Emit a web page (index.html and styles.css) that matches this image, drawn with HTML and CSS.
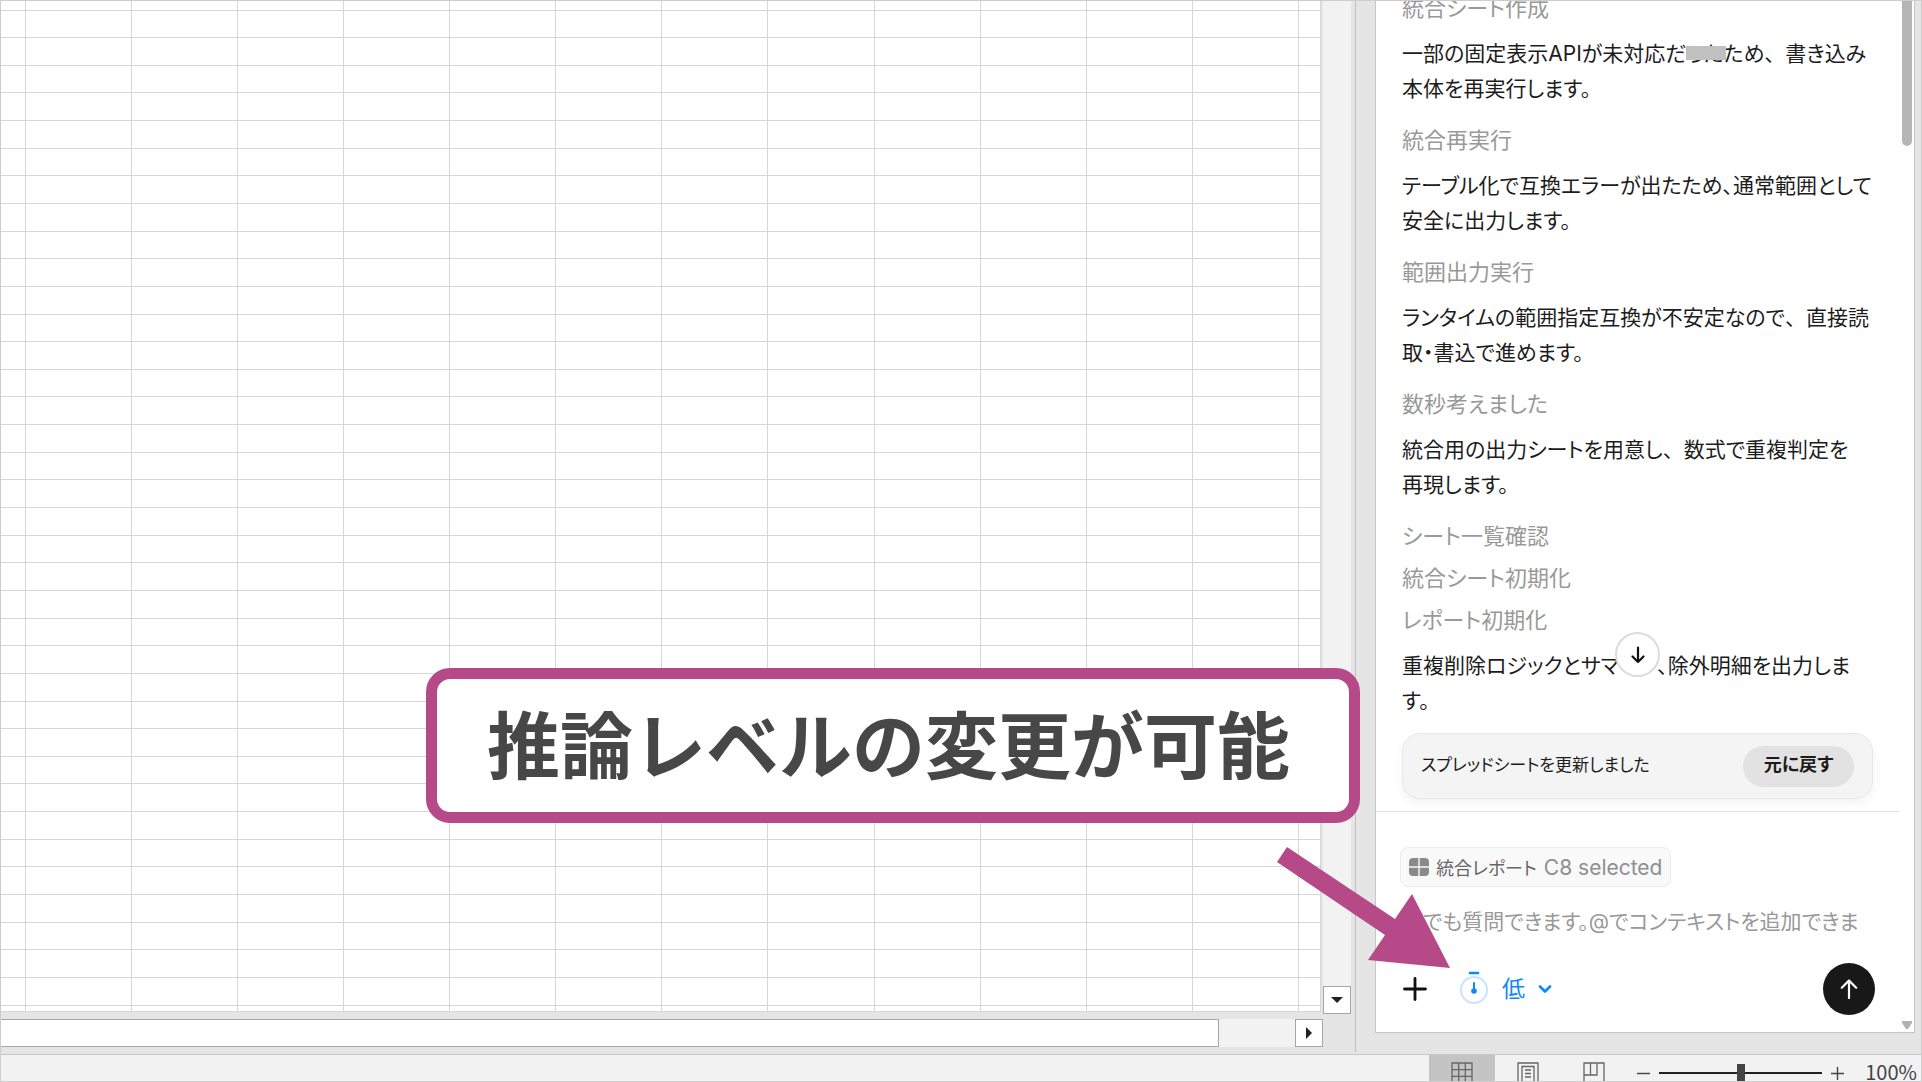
FILE: index.html
```html
<!DOCTYPE html>
<html lang="ja">
<head>
<meta charset="utf-8">
<title>統合レポート</title>
<link rel="stylesheet" href="styles.css">
</head>
<body>
<div class="app">
  <div class="workspace">
    <main class="workbook">
      <div class="sheet-area">
        <table class="sheet" id="sheet" aria-label="統合レポート"></table>
        <div class="v-scroll"><button class="scroll-btn" aria-label="下へスクロール"><svg width="12" height="6" viewBox="0 0 12 6"><path d="M0 0H12L6 6Z" fill="#222"/></svg></button></div>
      </div>
      <div class="h-scroll">
        <div class="h-thumb"></div>
        <button class="scroll-btn" aria-label="右へスクロール"><svg width="6" height="12" viewBox="0 0 6 12"><path d="M0 0V12L6 6Z" fill="#222"/></svg></button>
      </div>
    </main>
    <aside class="side">
      <div class="panel">
        <section class="log">
          <p class="step">統合シート作成</p>
          <p class="msg">一部の固定表示APIが未対応だったため<span class="comma">、</span>書き込み<br>本体を再実行します。</p>
          <p class="step">統合再実行</p>
          <p class="msg">テーブル化で互換エラーが出たため、通常範囲として<br>安全に出力します。</p>
          <p class="step">範囲出力実行</p>
          <p class="msg">ランタイムの範囲指定互換が不安定なので<span class="comma">、</span>直接読<br>取・書込で進めます。</p>
          <p class="step">数秒考えました</p>
          <p class="msg">統合用の出力シートを用意し<span class="comma">、</span>数式で重複判定を<br>再現します。</p>
          <p class="step">シート一覧確認</p>
          <p class="step">統合シート初期化</p>
          <p class="step">レポート初期化</p>
          <p class="msg">重複削除ロジックとサマリー、除外明細を出力しま<br>す。</p>
          <div class="card">
            <span>スプレッドシートを更新しました</span>
            <button class="undo">元に戻す</button>
          </div>
          <span class="handle"></span>
          <button class="jump" aria-label="最新へ移動"><svg width="16" height="18" viewBox="0 0 16 18" fill="none" stroke="#111" stroke-width="2.2" stroke-linecap="round" stroke-linejoin="round"><path d="M8 1.5V16M2.5 10.5L8 16L13.5 10.5"/></svg></button>
        </section>
        <form class="composer">
          <div class="chip">
            <svg width="20" height="18" viewBox="0 0 20 18" fill="#8a8a8a"><path d="M4 0H9.3V8.300H0V4A4 4 0 0 1 4 0ZM10.700 0H16A4 4 0 0 1 20 4V8.300H10.700ZM0 9.700H9.300V18H4A4 4 0 0 1 0 14ZM10.700 9.700H20V14A4 4 0 0 1 16 18H10.700Z"/></svg>
            <span class="chip-name">統合レポート</span><span class="chip-range">C8 selected</span>
          </div>
          <input class="prompt" type="text" aria-label="メッセージ" placeholder="何でも質問できます。@でコンテキストを追加できま">
          <div class="tools">
            <button type="button" class="icon-btn" aria-label="追加"><svg width="24" height="24" viewBox="0 0 24 24" stroke="#111" stroke-width="2.800" stroke-linecap="round"><path d="M12 1.500V22.500M1.500 12H22.500"/></svg></button>
            <button type="button" class="level">
              <svg width="30" height="36" viewBox="0 0 30 36" fill="none"><circle cx="15" cy="19" r="13" stroke="#c9e4ff" stroke-width="2"/><path d="M11 2H19" stroke="#0d88ff" stroke-width="2.600" stroke-linecap="round"/><path d="M15 12V20" stroke="#0d88ff" stroke-width="2" stroke-linecap="round"/><circle cx="15" cy="20" r="2.800" fill="#0d88ff"/></svg>
              <span>低</span>
              <svg width="14" height="10" viewBox="0 0 14 10" fill="none" stroke="#0d88ff" stroke-width="2.600" stroke-linecap="round" stroke-linejoin="round"><path d="M2 2.500L7 7.500L12 2.500"/></svg>
            </button>
            <button type="submit" class="send" aria-label="送信"><svg width="18" height="20" viewBox="0 0 18 20" fill="none" stroke="#fff" stroke-width="2.200" stroke-linecap="round" stroke-linejoin="round"><path d="M9 19V1.500M1.800 8.700L9 1.500L16.200 8.700"/></svg></button>
          </div>
        </form>
        <span class="panel-thumb"></span>
        <svg class="panel-down" width="10" height="8" viewBox="0 0 10 8"><path d="M0 0H10V2L6 8H4L0 2Z" fill="#b2b2b2"/></svg>
      </div>
    </aside>
  </div>
  <footer class="status">
    <button class="view active" aria-label="標準"><svg width="22" height="22" viewBox="0 0 22 22" fill="none" stroke="#666" stroke-width="1.300"><path d="M1 1H21V21H1ZM7.700 1V21M14.300 1V21M1 7.700H21M1 14.300H21"/></svg></button>
    <button class="view" aria-label="ページレイアウト"><svg width="22" height="22" viewBox="0 0 22 22" fill="none" stroke="#666" stroke-width="1.300"><path d="M1 22V1H21V22M5 22V4.500H17V22M8 8H14M8 11.500H14M8 15H14"/></svg></button>
    <button class="view" aria-label="改ページプレビュー"><svg width="22" height="22" viewBox="0 0 22 22" fill="none" stroke="#666" stroke-width="1.300"><path d="M1 22V1H21V22M1 13H14V1M7.500 1V13"/></svg></button>
    <button class="zoom-btn minus" aria-label="縮小"><svg width="13" height="13" viewBox="0 0 13 13" stroke="#444" stroke-width="1.400"><path d="M0 6.500H13"/></svg></button>
    <input class="zoom" type="range" min="0" max="100" value="50" aria-label="ズーム">
    <button class="zoom-btn" aria-label="拡大"><svg width="13" height="13" viewBox="0 0 13 13" stroke="#444" stroke-width="1.400"><path d="M0 6.500H13M6.500 0V13"/></svg></button>
    <span class="percent">100%</span>
  </footer>
  <svg class="pointer" width="176" height="124" viewBox="1276 846 176 124"><path d="M1287 847L1395 919L1412 894L1450 968L1368 960L1385 935L1277 862Z" fill="#b64a88"/></svg>
  <div class="callout">推論レベルの変更が可能</div>
</div>
<script src="sheet.js"></script>
</body>
</html>
```
FILE: styles.css
```css
* { box-sizing: border-box; }
body {
  margin: 0;
  font-family: Inter, "Noto Sans CJK JP", sans-serif;
  color: #1c1c1c;
}
button {
  margin: 0;
  padding: 0;
  border: 0;
  background: none;
  font: inherit;
  color: inherit;
}
svg { display: block; flex: none; }
.app {
  position: relative;
  display: flex;
  flex-direction: column;
  height: 100vh;
  overflow: hidden;
  border: 1px solid #cdcdcd;
  background: #e5e5e5;
}
.workspace { display: flex; flex: 1; min-height: 0; }

/* Workbook */
.workbook {
  display: flex;
  flex-direction: column;
  flex: 1;
  min-width: 0;
  margin-bottom: 2px;
  padding-bottom: 5px;
  border-right: 1px solid #bebebe;
}
.sheet-area { display: flex; flex: 1; min-height: 0; gap: 2px; padding-right: 4px; }
.sheet {
  flex: 1;
  height: calc(100% - 2px);
  table-layout: fixed;
  border-collapse: collapse;
  border-right: 1px solid #a0a0a0;
  border-bottom: 1px solid #a0a0a0;
  background: #fff;
}
.sheet td { padding: 0; border: 0 solid #d6d6d6; border-width: 0 1px 1px 0; }
.sheet .edge-col { width: 24px; }
.sheet .last-col { width: 22px; }
.sheet .edge-row { height: 9px; }
.sheet .last-row { height: 6px; }
.v-scroll { display: flex; align-items: flex-end; width: 28px; background: #f2f2f2; }
.scroll-btn {
  display: flex;
  align-items: center;
  justify-content: center;
  flex: none;
  width: 28px;
  height: 28px;
  border: 1px solid #a6a6a6;
  background: #fff;
}
.h-scroll { display: flex; margin: 5px 32px 0 0; background: #f2f2f2; }
.h-thumb { flex: 1; margin-right: 76px; border: 1px solid #a6a6a6; border-left: 0; background: #fff; }

/* Assistant panel */
.side { flex: none; width: 565px; padding: 0 6px 21px 19px; }
.panel {
  position: relative;
  display: flex;
  flex-direction: column;
  height: 100%;
  border: 1px solid #c6c6c6;
  border-top: 0;
  background: #fff;
}
.log {
  position: relative;
  display: flex;
  flex-direction: column;
  justify-content: flex-end;
  flex: 1;
  min-height: 0;
  overflow: hidden;
  margin-right: 15px;
  padding: 0 26px 12px 26px;
  border-bottom: 1px solid #e4e4e4;
  font-size: 22px;
  font-feature-settings: "palt";
  white-space: nowrap;
}
.step { flex: none; margin: 0 0 14px; line-height: 28px; color: #999; }
.msg { flex: none; margin: 0 0 20px; font-size: 21px; line-height: 35px; }
.comma { font-feature-settings: normal; }
.card {
  display: flex;
  flex: none;
  align-items: center;
  justify-content: space-between;
  height: 66px;
  margin-top: -5px;
  padding: 0 18px;
  border: 1px solid #e8e8e8;
  border-radius: 18px;
  background: #f4f4f4;
  box-shadow: 0 4px 10px #0000000d;
  font-size: 17px;
  line-height: 24px;
}
.card span { padding-bottom: 2px; }
.undo {
  width: 111px;
  height: 41px;
  padding-bottom: 2px;
  border-radius: 21px;
  background: #e2e2e2;
  font-weight: 700;
  font-size: 18px;
}
.handle { position: absolute; left: 310px; bottom: 751px; width: 40px; height: 14px; background: #c0c0c0; }
.jump {
  position: absolute;
  left: 239px;
  bottom: 134px;
  display: flex;
  align-items: center;
  justify-content: center;
  width: 45px;
  height: 45px;
  border: 2px solid #dcdcdc;
  border-radius: 50%;
  background: #fff;
}
.composer { display: flex; flex-direction: column; flex: none; align-items: flex-start; padding: 35px 39px 17px 24px; }
.chip {
  display: flex;
  align-items: center;
  gap: 7px;
  height: 40px;
  padding: 0 8px;
  border: 1px solid #ececec;
  border-radius: 8px;
  background: #f9f9f9;
  color: #666;
  font-size: 18px;
  font-feature-settings: "palt";
  white-space: nowrap;
}
.chip-range { color: #8f8f8f; font-size: 21px; }
.prompt {
  width: 100%;
  height: 36px;
  margin: 16px 0 0;
  padding: 0 0 0 2px;
  border: 0;
  outline: 0;
  background: none;
  font: inherit;
  font-size: 21px;
  font-feature-settings: "palt";
}
.prompt::placeholder { color: #999; opacity: 1; }
.tools { display: flex; align-items: center; width: 100%; height: 52px; margin-top: 24px; padding-left: 3px; }
.icon-btn { width: 24px; height: 24px; }
.level { display: flex; align-items: center; gap: 13px; margin-left: 32px; color: #0d88ff; font-size: 23px; line-height: 36px; }
.send {
  display: flex;
  align-items: center;
  justify-content: center;
  width: 52px;
  height: 52px;
  margin-left: auto;
  border-radius: 50%;
  background: #181818;
}
.panel-thumb { position: absolute; top: 0; right: 2px; width: 10px; height: 145px; border-radius: 0 0 5px 5px; background: #b5b5b5; }
.panel-down { position: absolute; right: 2px; bottom: 3px; }

/* Status bar */
.status {
  display: flex;
  justify-content: flex-end;
  flex: none;
  height: 27px;
  padding-right: 4px;
  border-top: 1px solid #c8c8c8;
  background: #f2f2f2;
}
.view { display: flex; justify-content: center; width: 66px; padding-top: 7px; overflow: hidden; }
.view.active { background: #c4c4c4; }
.zoom-btn { width: 13px; padding-top: 12px; display: flex; }
.minus { margin-left: 10px; }
.zoom { appearance: none; width: 163px; height: 36px; margin: 0 9px; background: none; }
.zoom::-webkit-slider-runnable-track { height: 2px; background: #222; }
.zoom::-webkit-slider-thumb { appearance: none; width: 8px; height: 18px; margin-top: -8px; background: #444; }
.percent { margin-left: 21px; font: 20px/34px "Noto Sans CJK JP", sans-serif; color: #444; }

/* Annotation */
.callout {
  position: absolute;
  right: 561px;
  bottom: 258px;
  width: 934px;
  height: 155px;
  padding-left: 50px;
  border: 11px solid #b64a88;
  border-radius: 24px;
  background: #fff;
  color: #474747;
  font-weight: 700;
  font-size: 73px;
  line-height: 135px;
  white-space: nowrap;
}
.pointer { position: absolute; right: 469px; bottom: 111px; }
```
FILE: sheet.js
```js
const ROWS = 38;
const COLS = 14;
const sheet = document.getElementById('sheet');

for (let r = 0; r < ROWS; r++) {
  const row = sheet.insertRow();
  if (r === 0) row.className = 'edge-row';
  if (r === ROWS - 1) row.className = 'last-row';
  for (let c = 0; c < COLS; c++) {
    const cell = row.insertCell();
    if (c === 0) cell.className = 'edge-col';
    if (c === COLS - 1) cell.className = 'last-col';
  }
}
```
